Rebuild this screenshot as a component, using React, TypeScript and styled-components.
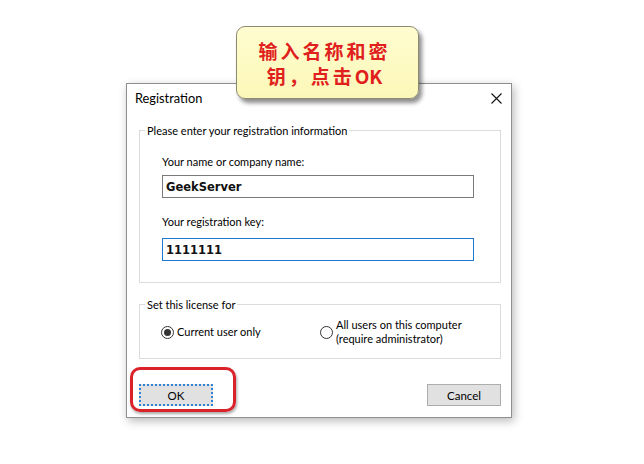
import React from "react";
import styled, { createGlobalStyle } from "styled-components";

const GlobalStyle = createGlobalStyle`
  html, body { margin: 0; padding: 0; background: #ffffff; }
  * { box-sizing: border-box; }
`;

const UI_FONT = `Lato, "Noto Sans", sans-serif`;

const Stage = styled.div`
  position: relative;
  width: 644px;
  height: 464px;
  padding: 83px 0 0 126px;
  background: #ffffff;
  font-family: ${UI_FONT};
  font-size: 11px;
  color: #000;
  overflow: hidden;
`;

const Dialog = styled.div`
  width: 386px;
  height: 335px;
  border: 1px solid #8f8f8f;
  background: #ffffff;
  box-shadow: 2px 3px 9px rgba(0, 0, 0, 0.28);
  display: flex;
  flex-direction: column;
`;

const TitleBar = styled.div`
  height: 28px;
  display: flex;
  align-items: center;
  justify-content: space-between;
  padding: 0 9px 0 8px;
`;

const Title = styled.span`
  font-size: 12.8px;
  line-height: 16px;
`;

const CloseButton = styled.div`
  width: 12px;
  height: 12px;
  display: flex;
  align-items: center;
  justify-content: center;
`;

const Body = styled.div`
  display: flex;
  flex-direction: column;
  padding: 18px 10px 0 12px;
`;

const Group = styled.div<{ $gapTop?: number }>`
  border: 1px solid #dcdcdc;
  margin-top: ${(p) => p.$gapTop ?? 0}px;
  display: flex;
  flex-direction: column;
`;

const Legend = styled.span<{ $indent: number }>`
  display: block;
  align-self: flex-start;
  height: 16px;
  line-height: 16px;
  margin: -8px 0 0 ${(p) => p.$indent}px;
  padding: 0 2px;
  background: #ffffff;
`;

const Fields = styled.div`
  display: flex;
  flex-direction: column;
  padding: 15px 0 21px 22px;
`;

const FieldLabel = styled.label<{ $top?: number }>`
  display: block;
  height: 16px;
  line-height: 16px;
  margin-top: ${(p) => p.$top ?? 0}px;
`;

const TextBox = styled.div<{ $focused?: boolean; $top: number }>`
  width: 312px;
  height: 23px;
  margin-top: ${(p) => p.$top}px;
  border: 1px solid ${(p) => (p.$focused ? "#1f79d2" : "#7a7a7a")};
  background: #ffffff;
  display: flex;
  align-items: center;
  padding-left: 3px;
  font-family: "DejaVu Sans", Verdana, sans-serif;
  font-weight: 700;
  font-size: 11.5px;
  color: #111;
`;

const RadioRow = styled.div`
  display: flex;
  align-items: center;
  height: 28px;
  margin: 5px 0 12px 21px;
`;

const RadioItem = styled.div<{ $width?: number }>`
  display: flex;
  align-items: center;
  gap: 3px;
  width: ${(p) => (p.$width ? `${p.$width}px` : "auto")};
`;

const RadioCircle = styled.span<{ $checked?: boolean }>`
  width: 13px;
  height: 13px;
  border-radius: 50%;
  border: 1px solid #333333;
  background: #ffffff;
  display: flex;
  align-items: center;
  justify-content: center;
  flex-shrink: 0;
  &::after {
    content: "";
    width: 7px;
    height: 7px;
    border-radius: 50%;
    background: ${(p) => (p.$checked ? "#333333" : "transparent")};
  }
`;

const RadioText = styled.span`
  line-height: 14px;
`;

const ButtonRow = styled.div`
  display: flex;
  justify-content: space-between;
  margin-top: 25px;
`;

const Button = styled.div<{ $default?: boolean }>`
  width: 74px;
  height: 22px;
  background: #e1e1e1;
  border: ${(p) => (p.$default ? "2px dotted #2d80d8" : "1px solid #adadad")};
  display: flex;
  align-items: center;
  justify-content: center;
  font-size: 11.5px;
`;

const Highlight = styled.div`
  position: absolute;
  left: 130px;
  top: 367px;
  width: 106px;
  height: 45px;
  border: 3px solid #d9222a;
  border-radius: 10px;
  box-shadow: 1px 2px 3px rgba(0, 0, 0, 0.35);
`;

const Callout = styled.div`
  position: absolute;
  left: 236px;
  top: 26px;
  width: 183px;
  height: 73px;
  border: 1px solid #8c8a70;
  border-radius: 9px;
  background: linear-gradient(#fffdd0, #fcf7b8);
  box-shadow: 3px 4px 4px rgba(0, 0, 0, 0.45);
  display: flex;
  flex-direction: column;
  align-items: center;
  justify-content: center;
  padding-right: 6px;
`;

const CalloutLine = styled.div`
  font-family: "Noto Sans CJK SC", "Noto Sans", sans-serif;
  font-weight: 700;
  font-size: 19px;
  line-height: 25px;
  letter-spacing: 3px;
  color: #e0201c;
  white-space: nowrap;
`;

const Latin = styled.span`
  letter-spacing: 0;
`;

export default function App() {
  return (
    <>
      <GlobalStyle />
      <Stage>
        <Dialog>
          <TitleBar>
            <Title>Registration</Title>
            <CloseButton>
              <svg width="11" height="11" viewBox="0 0 11 11">
                <path d="M0.5 0.5 L10.5 10.5 M10.5 0.5 L0.5 10.5" stroke="#111" strokeWidth="1.1" fill="none" />
              </svg>
            </CloseButton>
          </TitleBar>
          <Body>
            <Group>
              <Legend $indent={5}>Please enter your registration information</Legend>
              <Fields>
                <FieldLabel>Your name or company name:</FieldLabel>
                <TextBox $top={5}>GeekServer</TextBox>
                <FieldLabel $top={16}>Your registration key:</FieldLabel>
                <TextBox $top={8} $focused>
                  1111111
                </TextBox>
              </Fields>
            </Group>
            <Group $gapTop={21}>
              <Legend $indent={5}>Set this license for</Legend>
              <RadioRow>
                <RadioItem $width={159}>
                  <RadioCircle $checked />
                  <RadioText>Current user only</RadioText>
                </RadioItem>
                <RadioItem>
                  <RadioCircle />
                  <RadioText>
                    All users on this computer
                    <br />
                    (require administrator)
                  </RadioText>
                </RadioItem>
              </RadioRow>
            </Group>
            <ButtonRow>
              <Button $default>OK</Button>
              <Button>Cancel</Button>
            </ButtonRow>
          </Body>
        </Dialog>
        <Highlight />
        <Callout>
          <CalloutLine>输入名称和密</CalloutLine>
          <CalloutLine>
            钥，点击<Latin>OK</Latin>
          </CalloutLine>
        </Callout>
      </Stage>
    </>
  );
}
